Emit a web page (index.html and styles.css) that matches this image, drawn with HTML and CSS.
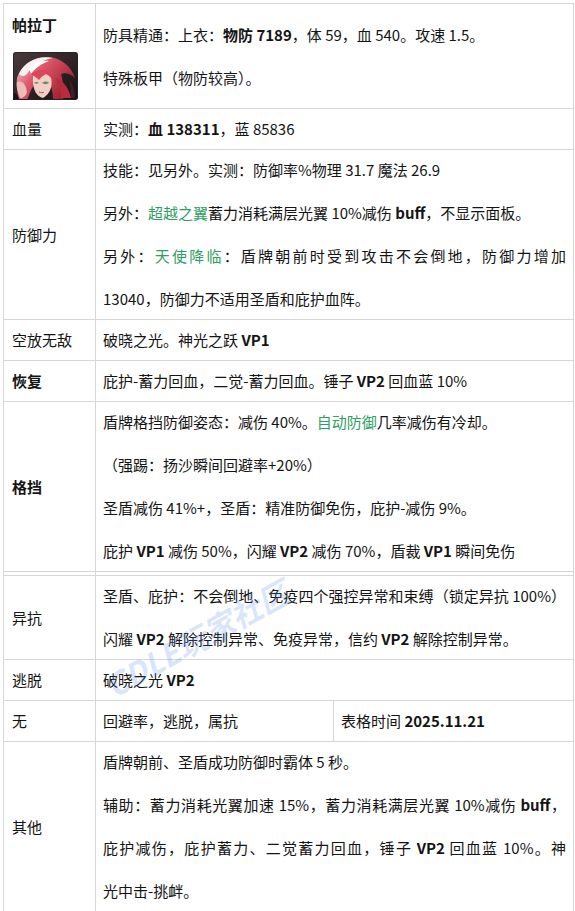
FILE: index.html
```html
<!DOCTYPE html>
<html lang="zh">
<head>
<meta charset="utf-8">
<title>帕拉丁</title>
<link rel="stylesheet" href="styles.css">
</head>
<body>
<div class="sheet">
<table class="info">
<colgroup><col class="c1"><col class="c2"><col class="c3"></colgroup>
<tr>
<td class="label hero">
<div class="name">帕拉丁</div>
<svg class="avatar" width="65" height="48" viewBox="0 0 65 48">
<defs>
<linearGradient id="bg" x1="0" y1="0" x2="1" y2="1"><stop offset="0" stop-color="#4a3a3c"/><stop offset="1" stop-color="#161012"/></linearGradient>
<linearGradient id="hair" x1="0" y1="0" x2="1" y2="0.6"><stop offset="0" stop-color="#f6e2e6"/><stop offset="0.4" stop-color="#e25a6c"/><stop offset="1" stop-color="#9a2030"/></linearGradient>
</defs>
<rect width="65" height="48" rx="3" fill="url(#bg)"/>
<path d="M4 26 C8 12 22 4 36 5 C48 6 58 14 62 26 C58 22 52 20 48 22 C50 30 52 38 50 48 L40 48 C40 40 38 32 34 26 C28 26 22 30 18 38 L14 48 L6 48 C4 40 3 32 4 26 Z" fill="url(#hair)"/>
<path d="M6 22 C12 8 28 3 40 6 C30 8 20 12 14 22 C12 24 9 25 6 22 Z" fill="#f6f1f2"/>
<path d="M16 16 C22 10 30 8 36 9 C28 12 22 16 18 22 Z" fill="#ffffff"/>
<path d="M20 24 C26 20 34 20 38 26 C40 34 37 42 30 46 C24 45 19 38 20 24 Z" fill="#f2cfc6"/>
<path d="M18 22 C26 16 36 16 42 22 C36 20 30 22 26 28 C24 26 21 24 18 22 Z" fill="#d9465a"/>
<path d="M29 31 C31 29 35 29 36 31 C34 32.5 31 32.5 29 31 Z" fill="#6e8a68"/>
<path d="M21 31 C22 29.5 25 29.5 26 31 C24 32 22 32 21 31 Z" fill="#6e8a68"/>
<path d="M26 40 C28 41 30 41 31 40" stroke="#b44a52" stroke-width="1" fill="none"/>
<path d="M4 30 C9 28 13 32 14 40 C13 44 10 46 7 46 C5 40 3 35 4 30 Z" fill="#ecbcb6"/>
<path d="M42 26 C50 28 56 36 58 46 L48 46 C48 38 46 32 42 26 Z" fill="#b82c3e"/>
<path d="M0 40 C4 42 6 45 6 48 L0 48 Z" fill="#1c1214"/>
<path d="M56 28 C60 32 62 38 62 46 L58 46 C58 40 57 34 56 28 Z" fill="#3a2226"/>
<rect x="0.5" y="0.5" width="64" height="47" rx="3" fill="none" stroke="#2a2224" stroke-width="1"/>
</svg>
</td>
<td colspan="2" class="val"><div class="lines"><p>防具精通：上衣：<b>物防 7189</b>，体 59，血 540。攻速 1.5。</p><p>特殊板甲（物防较高）。</p></div></td>
</tr>
<tr>
<td class="label">血量</td>
<td colspan="2" class="val"><div class="lines"><p>实测：<b>血 138311</b>，蓝 85836</p></div></td>
</tr>
<tr>
<td class="label">防御力</td>
<td colspan="2" class="val"><div class="lines">
<p>技能：见另外。实测：防御率%物理 31.7 魔法 26.9</p>
<p>另外：<span class="skill">超越之翼</span>蓄力消耗满层光翼 10%减伤 <span class="lat">buff</span>，不显示面板。</p>
<p class="just">另外：<span class="skill">天使降临</span>：盾牌朝前时受到攻击不会倒地，防御力增加</p>
<p>13040，防御力不适用圣盾和庇护血阵。</p>
</div></td>
</tr>
<tr>
<td class="label">空放无敌</td>
<td colspan="2" class="val"><div class="lines"><p>破晓之光。神光之跃 <span class="lat">VP1</span></p></div></td>
</tr>
<tr>
<td class="label"><b>恢复</b></td>
<td colspan="2" class="val"><div class="lines"><p>庇护-蓄力回血，二觉-蓄力回血。锤子 <span class="lat">VP2</span> 回血蓝 10%</p></div></td>
</tr>
<tr>
<td class="label"><b>格挡</b></td>
<td colspan="2" class="val"><div class="lines">
<p>盾牌格挡防御姿态：减伤 40%。<span class="skill">自动防御</span>几率减伤有冷却。</p>
<p>（强踢：扬沙瞬间回避率+20%）</p>
<p>圣盾减伤 41%+，圣盾：精准防御免伤，庇护-减伤 9%。</p>
<p>庇护 <span class="lat">VP1</span> 减伤 50%，闪耀 <span class="lat">VP2</span> 减伤 70%，盾裁 <span class="lat">VP1</span> 瞬间免伤</p>
</div></td>
</tr>
<tr class="gap"><td></td><td colspan="2"></td></tr>
<tr>
<td class="label">异抗</td>
<td colspan="2" class="val"><div class="lines">
<p class="just">圣盾、庇护：不会倒地、免疫四个强控异常和束缚（锁定异抗 100%）</p>
<p>闪耀 <span class="lat">VP2</span> 解除控制异常、免疫异常，信约 <span class="lat">VP2</span> 解除控制异常。</p>
</div></td>
</tr>
<tr>
<td class="label">逃脱</td>
<td colspan="2" class="val"><div class="lines"><p>破晓之光 <span class="lat">VP2</span></p></div></td>
</tr>
<tr>
<td class="label">无</td>
<td class="val"><div class="lines"><p>回避率，逃脱，属抗</p></div></td>
<td class="val"><div class="lines"><p>表格时间 <span class="lat">2025.11.21</span></p></div></td>
</tr>
<tr>
<td class="label">其他</td>
<td colspan="2" class="val"><div class="lines">
<p>盾牌朝前、圣盾成功防御时霸体 5 秒。</p>
<p class="just">辅助：蓄力消耗光翼加速 15%，蓄力消耗满层光翼 10%减伤 <span class="lat">buff</span>，</p>
<p class="just">庇护减伤，庇护蓄力、二觉蓄力回血，锤子 <span class="lat">VP2</span> 回血蓝 10%。神</p>
<p>光中击-挑衅。</p>
</div></td>
</tr>
</table>
<div class="watermark">CDLE玩家社区</div>
</div>
</body>
</html>
```
FILE: styles.css
```css
html, body {
  margin: 0;
  background: #ffffff;
}
body {
  padding: 3px;
  font-family: "Noto Sans CJK SC", "Noto Sans", sans-serif;
  font-size: 15px;
  color: #141414;
}
.sheet {
  position: relative;
  width: 570px;
}
.info {
  border-collapse: collapse;
  table-layout: fixed;
  width: 570px;
}
col.c1 { width: 92px; }
col.c2 { width: 238px; }
col.c3 { width: 240px; }
.info td {
  border: 1px solid #d6d6d6;
  padding: 8px 7px 8px 7px;
  line-height: 24px;
  vertical-align: middle;
}
.info td.label {
  padding-left: 8px;
}
.info td.hero {
  vertical-align: top;
  padding-top: 9px;
}
.name {
  font-weight: bold;
  height: 24px;
  line-height: 24px;
}
.avatar {
  display: block;
  margin-top: 15px;
  margin-left: 1px;
}
.lines {
  display: flex;
  flex-direction: column;
  gap: 19px;
}
.lines p {
  margin: 0;
  height: 24px;
  line-height: 24px;
  white-space: nowrap;
}
.lines p.just {
  text-align: justify;
  text-align-last: justify;
}
b {
  font-weight: bold;
}
.skill {
  color: #2f9e63;
}
.lat {
  font-weight: 600;
}
.gap td {
  height: 3px;
  padding: 0;
  font-size: 0;
  line-height: 0;
}
.watermark {
  position: absolute;
  left: 92px;
  top: 612px;
  font-size: 31px;
  font-weight: bold;
  font-style: italic;
  color: rgba(80, 140, 235, 0.22);
  transform: rotate(-29deg);
  pointer-events: none;
  white-space: nowrap;
}
```
